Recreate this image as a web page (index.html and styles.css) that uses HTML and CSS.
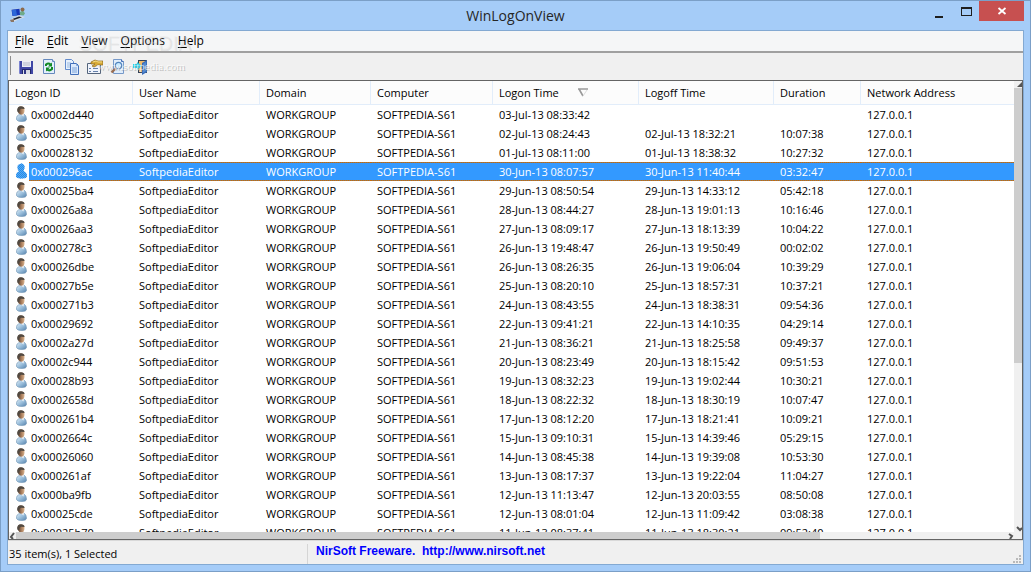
FILE: index.html
```
<!DOCTYPE html>
<html lang="en">
<head>
<meta charset="utf-8">
<title>WinLogOnView</title>
<link rel="stylesheet" href="styles.css">
<script src="rows.js" defer></script>
</head>
<body>
<svg class="defs" aria-hidden="true">
  <defs>
    <linearGradient id="shirt" x1="0" x2="1" y1="0" y2="1"><stop offset="0" stop-color="#e2eff8"/><stop offset=".5" stop-color="#9abedb"/><stop offset="1" stop-color="#5683ad"/></linearGradient>
    <linearGradient id="face" x1="0" x2="1"><stop offset="0" stop-color="#4a3527"/><stop offset=".55" stop-color="#a67b5b"/><stop offset="1" stop-color="#dab38d"/></linearGradient>
    <pattern id="dots" width="2" height="2" patternUnits="userSpaceOnUse"><path fill="#1c8cf0" d="M0 0h1v1H0zM1 1h1v1H1z"/></pattern>
    <symbol id="user" viewBox="0 0 16 16">
      <path d="M1.500 13.500Q1 9 5 8.500L9 8Q11.500 9.500 11.500 13 11.500 15.500 7 15.500 2 15.500 1.500 13.500z" fill="url(#shirt)" stroke="#6f93b3" stroke-width=".6"/>
      <path d="M5 7.500 9 7 8.500 10.500z" fill="#f4f4f4"/>
      <path d="M2.500 4Q2.500 .5 6 .5 9.500 .5 9.500 4 9.500 8.500 6.500 8.700 3 8.500 2.500 4z" fill="url(#face)"/>
      <path d="M2.300 5.500Q1.800 .4 6 .3 9.300 .3 9.600 3L6 2.800 4.500 4 4 6.500z" fill="#514941"/>
    </symbol>
    <symbol id="user-selected" viewBox="0 0 16 16">
      <path d="M1 13.500Q1 9 4 8.500 2 6 2.500 3 4 .2 7 .5 10 1.500 9.500 5L8.500 8Q12 9.500 12 13 12 15.500 7 15.500 2 15.500 1 13.500z" fill="#5fa9ec"/>
      <path d="M1 13.500Q1 9 4 8.500 2 6 2.500 3 4 .2 7 .5 10 1.500 9.500 5L8.500 8Q12 9.500 12 13 12 15.500 7 15.500 2 15.500 1 13.500z" fill="url(#dots)"/>
    </symbol>
  </defs>
</svg>
<div class="window">
  <header class="titlebar">
    <svg class="app-icon" viewBox="0 0 16 16"><path d="M1 2 10 1 11 9 2 10z" fill="#b9cfe8"/><path d="M1.500 2.700 9.500 1.700 10 8 2.500 9z" fill="#1538b8"/><path d="M2 3 6 2.500 7 8.500 2.500 8.800z" fill="#2c68d8"/><path d="M1 12 9 8.500 15 10 4 14.500z" fill="#d7dde4"/><path d="M3 11.800 9 9.500 12 10.300 4 13z" fill="#1b2432"/><path d="M0 13 4 12 4 15 1 15z" fill="#8b7665"/><path d="M10 5 13 3.500 15 6.500 13.500 8.500 10 8z" fill="#6eab8a"/><circle cx="12.500" cy="2.500" r="2" fill="#8c6a4b"/></svg>
    <h1>WinLogOnView</h1>
    <div class="controls">
      <button class="minimize" aria-label="Minimize"><svg viewBox="0 0 12 12"><path d="M2 9h8v2H2z" fill="#1e1e1e"/></svg></button>
      <button class="maximize" aria-label="Maximize"><svg viewBox="0 0 12 12"><path d="M1 2h10v8H1zM1 3h10" fill="none" stroke="#1e1e1e" shape-rendering="crispEdges"/></svg></button>
      <button class="close" aria-label="Close"><svg viewBox="0 0 12 12"><path d="M2.500 3 9.500 9M9.500 3 2.500 9" stroke="#fff" stroke-width="1.800"/></svg></button>
    </div>
  </header>
  <main class="client">
    <nav class="menu">
      <button><u>F</u>ile</button><button><u>E</u>dit</button><button><u>V</u>iew</button><button><u>O</u>ptions</button><button><u>H</u>elp</button>
      <span class="watermark">SOFTPEDIA<sup>™</sup></span>
    </nav>
    <div class="toolbar">
      <button aria-label="Save"><svg viewBox="0 0 16 16"><path d="M1 2h14v13H2l-1-1z" fill="#4047a5"/><path d="M1 2h1v12h-1z" fill="#7c84d1"/><path d="M4 2h9v6H4z" fill="#eceef5"/><path d="M5 4h7M5 6h7" stroke="#b2b7c8"/><path d="M4 10h9v5H4z" fill="#22276c"/><path d="M5 11h7v4H5z" fill="#d8dae4"/><path d="M6 11h2v4H6z" fill="#303784"/></svg></button>
      <button aria-label="Refresh"><svg viewBox="0 0 16 16"><path d="M2.500 .5h9l2 2v12h-11z" fill="#e2effc" stroke="#6589bd"/><path d="M11.500 .5v2h2" fill="#fff" stroke="#6589bd"/><path d="M5 7V5.500q2.500-2 4.500 0M11 8v2q-2.500 2.500-5 .5" fill="none" stroke="#128a24" stroke-width="2"/><path d="M11 3.500v4H7zM5 8.500h4l-4 4z" fill="#128a24"/></svg></button>
      <button aria-label="Copy"><svg viewBox="0 0 16 16"><path d="M1.500 .5h6l2 2v8h-8z" fill="#e7f1fd" stroke="#628bcc"/><path d="M3 4h4M3 6h5M3 8h3" stroke="#9ab9df"/><path d="M6.500 4.500h6l2 2v9h-8z" fill="#dbe9fc" stroke="#426fb9"/><path d="M12.500 4.500v2h2M8 9h5M8 11h5M8 13h5" fill="none" stroke="#7da4da"/></svg></button>
      <button aria-label="Properties"><svg viewBox="0 0 16 16"><path d="M.5 4.500h13v10H.5z" fill="#f0f4fc" stroke="#55657c"/><path d="M2 9.500h2M2 12.500h2M6 9.500h5M6 12.500h5" stroke="#6681ab"/><path d="M4 3 8 1 11 2h5v4h-5L7 8 5 7 8 5H4z" fill="#d7aa38" stroke="#8b681f" stroke-width=".7"/><path d="M6 3 9 2 11 3h4" fill="none" stroke="#f4dc83"/></svg></button>
      <button aria-label="Find"><svg viewBox="0 0 16 16"><path d="M3.500 .5h8l2 2v12h-10z" fill="#e0edfb" stroke="#7699c9"/><path d="M11.500 .5v2h2" fill="#fff" stroke="#426fb9"/><path d="M6 9 1.500 13.500" stroke="#9b6e52" stroke-width="2.400"/><circle cx="8.500" cy="6.500" r="3.200" fill="#c9e9ff" stroke="#5084bd" stroke-width="1.200"/></svg></button>
      <button aria-label="Exit"><svg viewBox="0 0 16 16"><path d="M5 1h9v13H5z" fill="#334156"/><path d="M6 2h6v11H6z" fill="#f0bb6c"/><path d="M9 4 14 1v12l-5 3z" fill="#396dba"/><path d="M10 5 13 3v9l-3 2z" fill="#538bd1"/><path d="M0 5h4V3l5 4-5 4V9H0z" fill="#20cfe9"/></svg></button>
      <span class="watermark url">www.softpedia.com</span>
    </div>
    <section class="list">
      <div class="view">
        <table>
          <colgroup><col class="c-id"><col class="c-user"><col class="c-domain"><col class="c-computer"><col class="c-logon"><col class="c-logoff"><col class="c-duration"><col></colgroup>
          <thead><tr><th>Logon ID</th><th>User Name</th><th>Domain</th><th>Computer</th><th>Logon Time<svg class="sort" viewBox="0 0 10 9"><path d="M0 1h10M1 1l4 7" stroke="#999" stroke-width="1.600" fill="none"/><path d="M9 2 5 8" stroke="#ddd"/></svg></th><th>Logoff Time</th><th>Duration</th><th>Network Address</th></tr></thead>
          <tbody id="sessions"></tbody>
        </table>
      </div>
      <div class="vbar"><svg viewBox="0 0 8 7"><path d="M3 6 8 1v5z" fill="#555"/></svg><div class="vthumb"></div><svg class="end" viewBox="0 0 8 7"><path d="M3 2 6 5 8 3" fill="none" stroke="#555" stroke-width="2"/></svg></div>
      <div class="hbar"><svg viewBox="0 0 7 7"><path d="M5 1 2 5 4 7" fill="none" stroke="#555" stroke-width="2"/></svg><div class="hthumb"></div><svg class="end" viewBox="0 0 7 7"><path d="M2 2 5 4 3 7" fill="none" stroke="#555" stroke-width="2"/></svg></div>
      <div class="corner"></div>
    </section>
    <footer class="status">
      <span class="count">35 item(s), 1 Selected</span>
      <a href="http://www.nirsoft.net">NirSoft Freeware.&nbsp; http://www.nirsoft.net</a>
      <svg class="grip" viewBox="0 0 8 8"><path d="M6 0h2v2H6zM3 3h2v2H3zM6 3h2v2H6zM0 6h2v2H0zM3 6h2v2H3zM6 6h2v2H6z" fill="#b9b9b9"/></svg>
    </footer>
  </main>
</div>
</body>
</html>
```
FILE: styles.css
```
* { box-sizing: border-box; }
body { margin: 0; font: 11px/19px "Open Sans", "Noto Sans", sans-serif; color: #000; }
button { border: 0; padding: 0; background: none; font: inherit; color: inherit; }
svg { display: block; }
.defs { position: absolute; width: 0; height: 0; }
.window { height: 100vh; display: flex; flex-direction: column; padding: 0 6px 6px; background: #a5ccf8; border: 1px solid #7b9fc7; }
.titlebar { height: 29px; flex: none; display: grid; grid-template-columns: 126px 1fr 126px; }
.app-icon { width: 16px; height: 16px; margin: 6px 0 0 3px; }
h1 { margin: 0; font: 14px/29px "Open Sans", "Noto Sans", sans-serif; text-align: center; color: #262626; }
.controls { display: flex; justify-content: flex-end; height: 20px; }
.controls button { width: 27px; display: grid; place-items: center; }
.controls svg { width: 12px; height: 12px; }
.controls .minimize svg { margin-top: 4px; }
.controls .close { width: 45px; background: #c75050; }
.client { flex: 1; min-height: 0; display: flex; flex-direction: column; border: 1px solid #83a9d2; background: #f0f0f0; }
.menu { position: relative; display: flex; gap: 13px; height: 22px; flex: none; padding-left: 7px; background: #f5f6f7; border-bottom: 2px solid #a0a0a0; font-size: 12px; line-height: 20px; }
.menu u { text-underline-offset: 2px; }
.toolbar { position: relative; height: 27px; flex: none; display: flex; align-items: center; gap: 7px; margin-left: 2px; padding-left: 8px; }
.toolbar::before { content: ""; position: absolute; left: 0; top: 3px; bottom: 5px; width: 1px; background: #8e8e8e; }
.toolbar button, .toolbar button svg { width: 16px; height: 16px; }
.watermark { position: absolute; left: 70px; top: 3px; font: 20px/19px "Liberation Sans", sans-serif; color: rgba(225, 225, 225, .3); text-shadow: 1px 1px rgba(120, 120, 120, .15); pointer-events: none; white-space: nowrap; }
.watermark sup { font-size: 8px; line-height: 8px; }
.watermark.url { left: 87px; top: 4px; font: 11px/19px "Liberation Serif", serif; color: rgba(255, 255, 255, .75); text-shadow: 1px 1px rgba(120, 120, 120, .4); }
.list { flex: 1; min-height: 0; display: grid; grid-template: minmax(0, 1fr) 7px / minmax(0, 1fr) 8px; border: 1px solid #646464; background: #fff; }
.view { overflow: hidden; }
table { width: 100%; table-layout: fixed; border-collapse: separate; border-spacing: 0; }
.c-id { width: 124px; } .c-user { width: 127px; } .c-domain { width: 111px; } .c-computer { width: 122px; }
.c-logon { width: 146px; } .c-logoff { width: 135px; } .c-duration { width: 87px; }
th { height: 24px; padding: 0 6px; text-align: left; font-weight: normal; line-height: 22px; background: #fcfcfc; border-right: 1px solid #e2edfa; border-bottom: 1px solid #e2edfa; white-space: nowrap; }
th:last-child { border-right: 0; }
.sort { display: inline-block; width: 10px; height: 9px; margin-left: 19px; }
td { height: 19px; padding: 0 6px; white-space: nowrap; }
td:first-child { padding: 0 0 0 6px; }
.id { display: flex; height: 19px; }
.id svg { width: 16px; height: 16px; margin-top: 1px; margin-right: -2px; flex: none; }
.id span { flex: 1; padding-left: 2px; }
.selected { color: #fff; }
.selected td:not(:first-child), .selected .id span {
  background:
    repeating-linear-gradient(90deg, #c8680a 0 1px, #8a7a5c 1px 2px) top / 100% 1px no-repeat,
    repeating-linear-gradient(90deg, #c8680a 0 1px, #8a7a5c 1px 2px) bottom / 100% 1px no-repeat,
    #3399ff;
}
.vbar { display: flex; flex-direction: column; background: #f0f0f0; }
.vbar svg { width: 8px; height: 7px; flex: none; }
.vthumb { height: 61%; background: #cdcdcd; }
.hbar { display: flex; background: #f0f0f0; min-width: 0; }
.hbar svg { width: 7px; height: 7px; flex: none; }
.hthumb { width: 80%; background: #cdcdcd; }
.vbar .end { margin-top: auto; }
.hbar .end { margin-left: auto; }
.corner { background: #f0f0f0; }
.status { height: 24px; flex: none; display: flex; padding: 3px 2px 0 1px; border-top: 1px solid #d9d9d9; }
.count { width: 299px; line-height: 19px; border-right: 1px solid #d5d5d5; }
.status a { margin-left: 8px; font: bold 12px/14px "Liberation Sans", Arial, sans-serif; font-size: 12px; color: #0000ff; text-decoration: none; }
.grip { width: 8px; height: 8px; margin: 11px 0 0 auto; }
```
FILE: rows.js
```
const sessions = [
  ["0x0002d440", "03-Jul-13 08:33:42", "", ""],
  ["0x00025c35", "02-Jul-13 08:24:43", "02-Jul-13 18:32:21", "10:07:38"],
  ["0x00028132", "01-Jul-13 08:11:00", "01-Jul-13 18:38:32", "10:27:32"],
  ["0x000296ac", "30-Jun-13 08:07:57", "30-Jun-13 11:40:44", "03:32:47"],
  ["0x00025ba4", "29-Jun-13 08:50:54", "29-Jun-13 14:33:12", "05:42:18"],
  ["0x00026a8a", "28-Jun-13 08:44:27", "28-Jun-13 19:01:13", "10:16:46"],
  ["0x00026aa3", "27-Jun-13 08:09:17", "27-Jun-13 18:13:39", "10:04:22"],
  ["0x000278c3", "26-Jun-13 19:48:47", "26-Jun-13 19:50:49", "00:02:02"],
  ["0x00026dbe", "26-Jun-13 08:26:35", "26-Jun-13 19:06:04", "10:39:29"],
  ["0x00027b5e", "25-Jun-13 08:20:10", "25-Jun-13 18:57:31", "10:37:21"],
  ["0x000271b3", "24-Jun-13 08:43:55", "24-Jun-13 18:38:31", "09:54:36"],
  ["0x00029692", "22-Jun-13 09:41:21", "22-Jun-13 14:10:35", "04:29:14"],
  ["0x0002a27d", "21-Jun-13 08:36:21", "21-Jun-13 18:25:58", "09:49:37"],
  ["0x0002c944", "20-Jun-13 08:23:49", "20-Jun-13 18:15:42", "09:51:53"],
  ["0x00028b93", "19-Jun-13 08:32:23", "19-Jun-13 19:02:44", "10:30:21"],
  ["0x0002658d", "18-Jun-13 08:22:32", "18-Jun-13 18:30:19", "10:07:47"],
  ["0x000261b4", "17-Jun-13 08:12:20", "17-Jun-13 18:21:41", "10:09:21"],
  ["0x0002664c", "15-Jun-13 09:10:31", "15-Jun-13 14:39:46", "05:29:15"],
  ["0x00026060", "14-Jun-13 08:45:38", "14-Jun-13 19:39:08", "10:53:30"],
  ["0x000261af", "13-Jun-13 08:17:37", "13-Jun-13 19:22:04", "11:04:27"],
  ["0x000ba9fb", "12-Jun-13 11:13:47", "12-Jun-13 20:03:55", "08:50:08"],
  ["0x00025cde", "12-Jun-13 08:01:04", "12-Jun-13 11:09:42", "03:08:38"],
  ["0x00025b70", "11-Jun-13 08:37:41", "11-Jun-13 18:30:21", "09:52:40"]
];
const selectedId = "0x000296ac";
document.getElementById("sessions").innerHTML = sessions.map(([id, logon, logoff, duration]) => {
  const on = id === selectedId;
  return `<tr${on ? ' class="selected"' : ""}><td><div class="id"><svg><use href="#${on ? "user-selected" : "user"}"/></svg><span>${id}</span></div></td>` +
    `<td>SoftpediaEditor</td><td>WORKGROUP</td><td>SOFTPEDIA-S61</td><td>${logon}</td><td>${logoff}</td><td>${duration}</td><td>127.0.0.1</td></tr>`;
}).join("");
```
